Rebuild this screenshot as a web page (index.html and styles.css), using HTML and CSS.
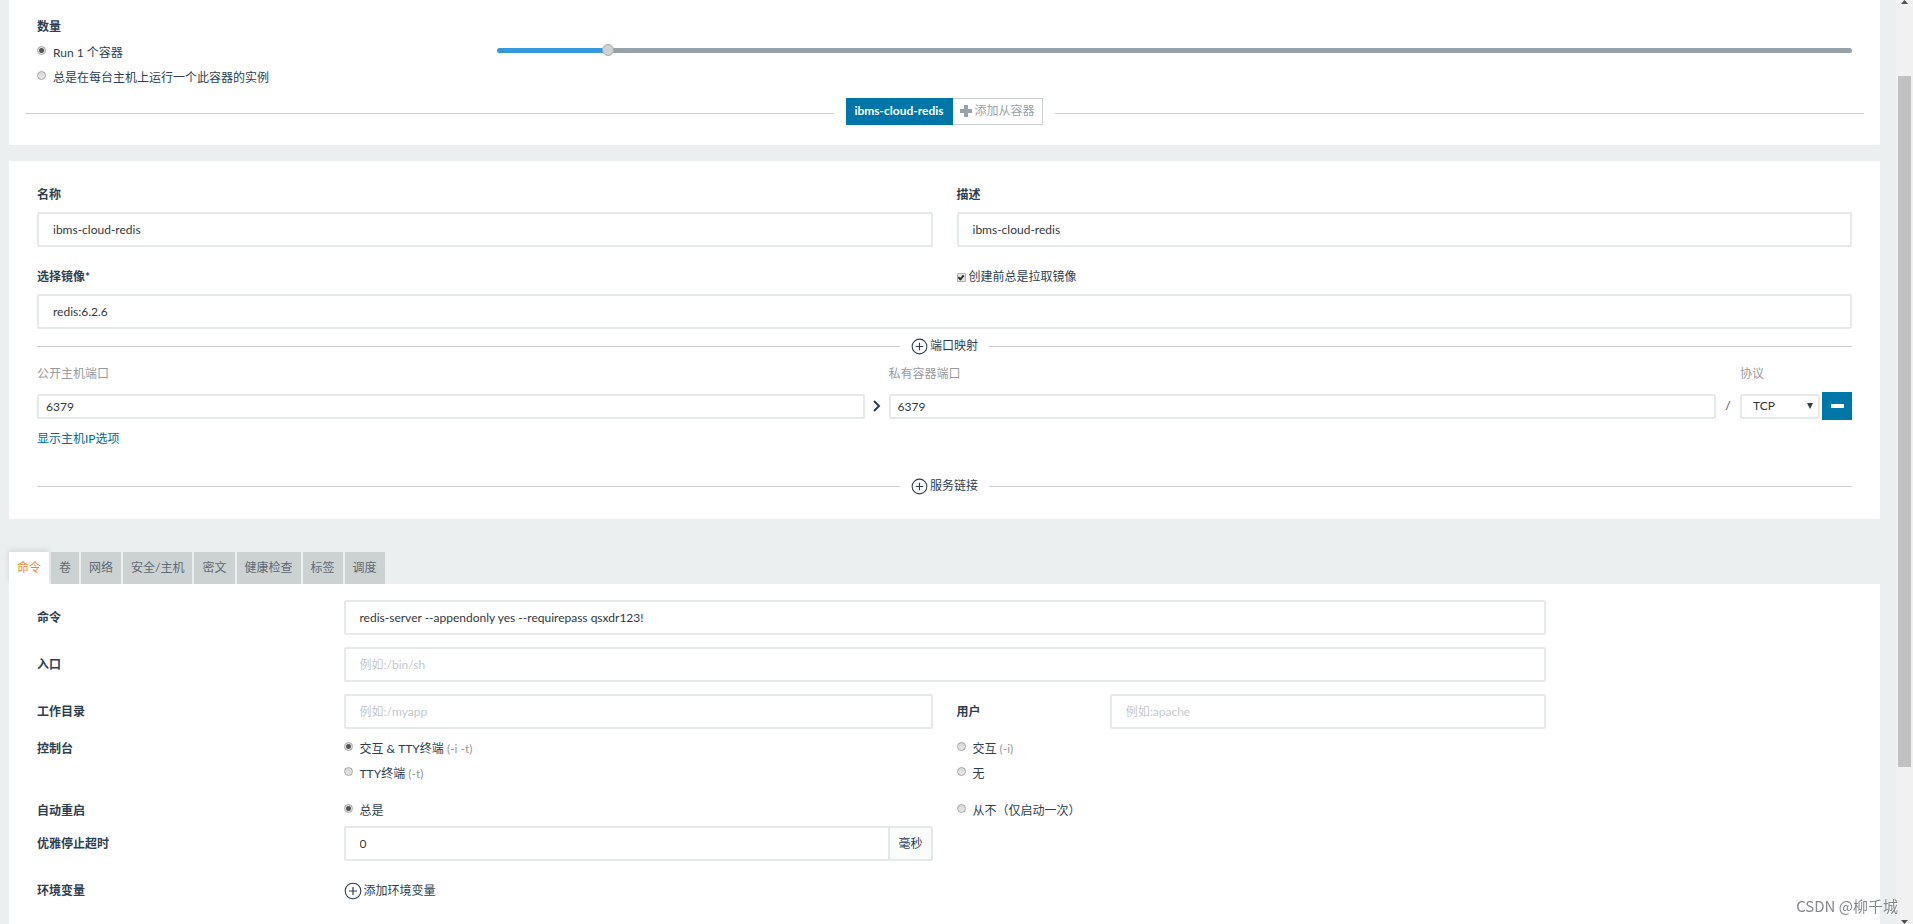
FILE: index.html
```html
<!DOCTYPE html>
<html lang="zh-CN">
<head>
<meta charset="utf-8">
<title>ibms-cloud-redis</title>
<link rel="stylesheet" href="styles.css">
</head>
<body>
<svg class="symbols" aria-hidden="true">
  <symbol id="plus-circle" viewBox="0 0 18 18">
    <circle cx="9" cy="9" r="7.8" fill="none" stroke="currentColor" stroke-width="1.1"/>
    <path d="M9 5v8M5 9h8" fill="none" stroke="currentColor" stroke-width="1.2"/>
  </symbol>
</svg>
<main class="page">
  <section class="panel panel-scale">
    <div class="inner">
      <h2 class="label">数量</h2>
      <div class="grid scale-row">
        <div class="col-3 radios">
          <label class="choice"><input type="radio" name="scale" checked><span>Run 1 个容器</span></label>
          <label class="choice"><input type="radio" name="scale"><span>总是在每台主机上运行一个此容器的实例</span></label>
        </div>
        <input class="col-9 slider" type="range" min="0" max="100" step="0.1" value="7.8" aria-label="数量">
      </div>
    </div>
    <div class="divider divider-buttons">
      <div class="switcher">
        <button class="switch active" type="button">ibms-cloud-redis</button>
        <button class="switch" type="button"><svg class="plus" viewBox="0 0 12 12" aria-hidden="true"><path d="M4 0h4v4h4v4H8v4H4V8H0V4h4z" fill="currentColor"/></svg>添加从容器</button>
      </div>
    </div>
  </section>

  <section class="panel panel-image">
    <div class="inner">
      <div class="grid fields">
        <div class="col-6 field">
          <label class="label" for="name">名称</label>
          <input class="text" id="name" type="text" value="ibms-cloud-redis">
        </div>
        <div class="col-6 field">
          <label class="label" for="desc">描述</label>
          <input class="text" id="desc" type="text" value="ibms-cloud-redis">
        </div>
        <div class="col-12 field">
          <div class="grid">
            <label class="label col-6" for="image">选择镜像*</label>
            <label class="check col-6"><input type="checkbox" checked><span>创建前总是拉取镜像</span></label>
          </div>
          <input class="text" id="image" type="text" value="redis:6.2.6">
        </div>
      </div>
      <div class="divider divider-ports"><button class="add" type="button"><svg class="ring" aria-hidden="true"><use href="#plus-circle"/></svg>端口映射</button></div>
      <div class="ports">
        <label class="muted port-public" for="public">公开主机端口</label>
        <label class="muted port-private" for="private">私有容器端口</label>
        <label class="muted port-protocol" for="protocol">协议</label>
        <input class="text small" id="public" type="text" value="6379">
        <svg class="chevron" viewBox="0 0 8 12" aria-hidden="true"><path d="M1 1l5 5-5 5" fill="none" stroke="currentColor" stroke-width="2"/></svg>
        <input class="text small" id="private" type="text" value="6379">
        <span class="slash">/</span>
        <div class="select">
          <select id="protocol"><option>TCP</option><option>UDP</option></select>
          <svg viewBox="0 0 6 6" aria-hidden="true"><path d="M0 0h6L3 6z" fill="currentColor"/></svg>
        </div>
        <button class="remove" type="button" aria-label="移除"><svg viewBox="0 0 13 4" aria-hidden="true"><path d="M0 0h13v4H0z" fill="currentColor"/></svg></button>
      </div>
      <a class="link" href="#">显示主机IP选项</a>
      <div class="divider divider-links"><button class="add" type="button"><svg class="ring" aria-hidden="true"><use href="#plus-circle"/></svg>服务链接</button></div>
    </div>
  </section>

  <nav class="tabs" role="tablist">
    <button class="tab active" role="tab" aria-selected="true" type="button">命令</button>
    <button class="tab" role="tab" type="button">卷</button>
    <button class="tab" role="tab" type="button">网络</button>
    <button class="tab" role="tab" type="button">安全/主机</button>
    <button class="tab" role="tab" type="button">密文</button>
    <button class="tab" role="tab" type="button">健康检查</button>
    <button class="tab" role="tab" type="button">标签</button>
    <button class="tab" role="tab" type="button">调度</button>
  </nav>

  <section class="panel panel-command">
    <div class="inner">
      <div class="grid form">
        <label class="label col-2" for="command">命令</label>
        <input class="text col-8" id="command" type="text" value="redis-server --appendonly yes --requirepass qsxdr123!">
        <label class="label col-2 row-start" for="entry">入口</label>
        <input class="text col-8" id="entry" type="text" placeholder="例如:/bin/sh">
        <label class="label col-2 row-start" for="workdir">工作目录</label>
        <input class="text col-4" id="workdir" type="text" placeholder="例如:/myapp">
        <label class="label col-1" for="user">用户</label>
        <input class="text col-3" id="user" type="text" placeholder="例如:apache">
      </div>
      <div class="grid console">
        <h3 class="label col-2">控制台</h3>
        <div class="col-4 radios">
          <label class="choice"><input type="radio" name="console" checked><span>交互 &amp; TTY终端 <span class="muted">(-i -t)</span></span></label>
          <label class="choice"><input type="radio" name="console"><span>TTY终端 <span class="muted">(-t)</span></span></label>
        </div>
        <div class="col-4 radios">
          <label class="choice"><input type="radio" name="console"><span>交互 <span class="muted">(-i)</span></span></label>
          <label class="choice"><input type="radio" name="console"><span>无</span></label>
        </div>
      </div>
      <div class="grid restart">
        <h3 class="label col-2">自动重启</h3>
        <div class="col-4"><label class="choice"><input type="radio" name="restart" checked><span>总是</span></label></div>
        <div class="col-4"><label class="choice"><input type="radio" name="restart"><span>从不（仅启动一次）</span></label></div>
      </div>
      <div class="grid timeout">
        <label class="label col-2" for="timeout">优雅停止超时</label>
        <div class="col-4 group">
          <input class="text" id="timeout" type="text" value="0">
          <span class="addon">毫秒</span>
        </div>
      </div>
      <div class="grid env">
        <h3 class="label col-2">环境变量</h3>
        <div class="col-4"><button class="add add-env" type="button"><svg class="ring" aria-hidden="true"><use href="#plus-circle"/></svg>添加环境变量</button></div>
      </div>
    </div>
  </section>
</main>
<div class="scrollbar" aria-hidden="true">
  <svg class="arrow" viewBox="0 0 7 4"><path d="M3.5 0L7 4H0z" fill="currentColor"/></svg>
  <div class="before"></div>
  <div class="thumb"></div>
  <div class="after"></div>
  <svg class="arrow" viewBox="0 0 7 4"><path d="M0 0h7L3.5 4z" fill="currentColor"/></svg>
</div>
<div class="watermark">CSDN @柳千城</div>
</body>
</html>
```
FILE: styles.css
```css
* { box-sizing: border-box; }

body {
  margin: 0;
  height: 100vh;
  display: flex;
  overflow: hidden;
  background: #ebeff0;
  color: #2c3e50;
  font: 12px/16px Lato, "Noto Sans CJK SC", sans-serif;
}

button, input, select { margin: 0; font: inherit; color: inherit; }
button { padding: 0; border: 0; background: none; cursor: pointer; }

.symbols { display: none; }

.page {
  flex: 1;
  min-width: 0;
  display: flex;
  flex-direction: column;
  padding: 0 16px 0 9px;
}

.panel { flex: none; padding: 0 16px; background: #fff; }
.inner { padding: 0 12px; }
.panel-scale { padding-top: 19px; padding-bottom: 20px; }
.panel-image { margin-top: 16px; padding-top: 26px; padding-bottom: 24px; }
.panel-command { flex: 1 0 auto; padding-top: 16px; padding-bottom: 16px; }

.label { margin: 0; font-size: 12px; line-height: 16px; font-weight: 700; }
.muted { color: #999; }

.grid {
  display: grid;
  grid-template-columns: repeat(12, minmax(0, 1fr));
  column-gap: 24px;
}
.col-1 { grid-column-end: span 1; }
.col-2 { grid-column-end: span 2; }
.col-3 { grid-column-end: span 3; }
.col-4 { grid-column-end: span 4; }
.col-6 { grid-column-end: span 6; }
.col-8 { grid-column-end: span 8; }
.col-9 { grid-column-end: span 9; }
.col-12 { grid-column-end: span 12; }
.row-start { grid-column-start: 1; }

/* Radios and checkbox */
.radios { display: flex; flex-direction: column; gap: 9px; }
.choice { display: flex; gap: 7px; white-space: nowrap; }
.choice input {
  appearance: none;
  flex: none;
  width: 9px;
  height: 9px;
  margin-top: 1px;
  border: 1px solid #a6a6a6;
  border-radius: 50%;
  background: linear-gradient(#d8d8d8, #e8e8e8);
}
.choice input:checked { background: radial-gradient(circle, #555 0 2px, #e4e4e4 3px); }
.check { display: flex; align-items: center; gap: 3px; }
.check input {
  appearance: none;
  display: grid;
  width: 9px;
  height: 9px;
  border: 1px solid #b0b0b0;
  border-radius: 1px;
  background: #e3e3e3;
}
.check input:checked::after {
  content: "";
  box-sizing: content-box;
  width: 2px;
  height: 4px;
  margin: 0 auto;
  border: solid #333;
  border-width: 0 2px 2px 0;
  transform: rotate(40deg);
}

/* Scale slider */
.scale-row { margin-top: 10px; align-items: start; }
.slider { appearance: none; width: 100%; height: 10px; background: none; }
.slider::-webkit-slider-runnable-track {
  height: 5px;
  border-radius: 3px;
  background: linear-gradient(to right, #3498db 8%, #98a2a9 8%);
}
.slider::-webkit-slider-thumb {
  appearance: none;
  width: 12px;
  height: 12px;
  margin-top: -4px;
  border: 1px solid #a3abb0;
  border-radius: 50%;
  background: #ccd1d4;
}

/* Horizontal rules with centred content */
.divider { display: flex; align-items: center; gap: 12px; }
.divider::before, .divider::after { content: ""; flex: 1; height: 1px; background: #cccfd0; }
.divider-buttons { margin-top: 12px; }
.divider-buttons::before, .divider-buttons::after { margin-top: 4px; }
.divider-ports { margin-top: 8px; }
.divider-links { margin-top: 30px; }

.switcher { display: flex; }
.switch {
  display: flex;
  align-items: center;
  height: 27px;
  padding: 0 7px 2px;
  border: 1px solid #ccd1d2;
  border-left: 0;
  color: #98a2a9;
}
.switch.active { padding: 0 8px 2px; border-color: #0075a8; background: #0075a8; color: #fff; font-weight: 700; }
.plus { width: 12px; height: 12px; margin-right: 3px; }

.add { display: flex; align-items: center; gap: 2px; height: 18px; }
.divider .add { margin: 0 -1px; }
.ring { width: 17px; height: 17px; }

/* Text inputs */
.text {
  display: block;
  width: 100%;
  min-width: 0;
  height: 35px;
  padding: 0 14px;
  border: 2px solid #e4e9e9;
  border-radius: 2px;
  background: #fff;
  color: #34373c;
}
.text::placeholder { color: #c5c8cc; }
.text.small { height: 25px; padding: 0 7px; }
.fields { row-gap: 22px; }
.field { display: flex; flex-direction: column; gap: 9px; }

/* Port mapping */
.ports {
  display: grid;
  grid-template-columns: minmax(0, 1fr) 24px minmax(0, 1fr) 24px 80px 32px;
  row-gap: 10px;
  align-items: center;
  margin-top: 11px;
}
.port-public { grid-column: 1 / span 2; }
.port-private { grid-column: 3 / span 2; }
.port-protocol { grid-column: 5 / span 2; }
.chevron { width: 8px; height: 12px; justify-self: center; }
.slash { text-align: center; }
.select { display: grid; align-items: center; }
.select select {
  grid-area: 1 / 1;
  appearance: none;
  height: 25px;
  padding: 0 11px;
  border: 2px solid #e4e9e9;
  border-radius: 2px;
  background: #fff;
  color: #34373c;
}
.select svg { grid-area: 1 / 1; justify-self: end; width: 6px; height: 6px; margin-right: 7px; pointer-events: none; }
.remove {
  display: grid;
  place-items: center;
  width: 30px;
  height: 28px;
  justify-self: end;
  background: #0075a8;
  color: #fff;
}
.remove svg { width: 13px; height: 4px; }
.link { display: block; width: max-content; margin-top: 11px; color: #00689b; text-decoration: none; }

/* Tabs */
.tabs { display: flex; gap: 2px; margin-top: 33px; height: 32px; }
.tab { padding: 0 8px; background: #ccd1d2; color: #5f6a72; }
.tab.active { background: #fff; color: #ee8429; box-shadow: 0 -2px 6px rgba(0, 0, 0, 0.1); }

/* Command form */
.form { row-gap: 12px; align-items: center; }
.console { margin-top: 12px; }
.restart { margin-top: 21px; }
.timeout { margin-top: 7px; align-items: center; }
.env { margin-top: 21px; align-items: center; }
.group { display: flex; }
.group .text { border-right: 0; border-radius: 2px 0 0 2px; }
.addon {
  flex: none;
  display: grid;
  place-items: center;
  padding: 0 8px;
  border: 2px solid #e4e9e9;
  border-radius: 0 2px 2px 0;
  background: #fafcfc;
}
.add-env .ring { width: 18px; height: 18px; }

/* Window scrollbar */
.scrollbar {
  flex: none;
  width: 17px;
  display: flex;
  flex-direction: column;
  align-items: center;
  background: #f1f1f1;
  color: #505050;
}
.arrow { flex: none; width: 7px; height: 4px; }
.before { flex: 72; }
.thumb { flex: 691; width: 13px; background: #c1c1c1; }
.after { flex: 153; }

.watermark {
  position: fixed;
  right: 15px;
  bottom: 7px;
  font: 15px/22px "Noto Sans CJK SC", sans-serif;
  color: #85898c;
  text-shadow: 1px 1px 1px #fff;
}
```
